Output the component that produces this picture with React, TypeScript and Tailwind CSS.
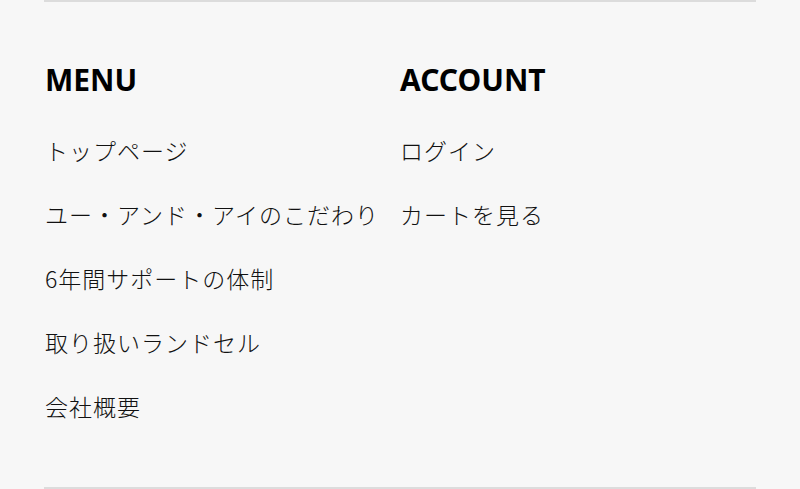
const menuLinks = [
  'トップページ',
  'ユー・アンド・アイのこだわり',
  '6年間サポートの体制',
  '取り扱いランドセル',
  '会社概要',
];

const accountLinks = ['ログイン', 'カートを見る'];

function LinkColumn({ title, links }: { title: string; links: string[] }) {
  return (
    <div className="flex flex-col">
      <h2 className="text-[30px] leading-[40px] font-bold text-black font-['Noto_Sans','Noto_Sans_CJK_JP',sans-serif]">
        {title}
      </h2>
      <ul className="mt-[18px] flex flex-col">
        {links.map((link) => (
          <li key={link}>
            <a
              href="#"
              className="block text-[23px] leading-[64px] tracking-[1px] font-light text-[#111111] whitespace-nowrap"
            >
              {link}
            </a>
          </li>
        ))}
      </ul>
    </div>
  );
}

export default function App() {
  return (
    <div className="min-h-screen w-full bg-[#f7f7f7] font-['Noto_Sans_CJK_JP','Noto_Sans',sans-serif]">
      <footer className="mx-[44px] border-y-2 border-[#dcdcdc] h-[489px]">
        <div className="grid grid-cols-2 pt-[58px] px-[1px]">
          <LinkColumn title="MENU" links={menuLinks} />
          <LinkColumn title="ACCOUNT" links={accountLinks} />
        </div>
      </footer>
    </div>
  );
}
